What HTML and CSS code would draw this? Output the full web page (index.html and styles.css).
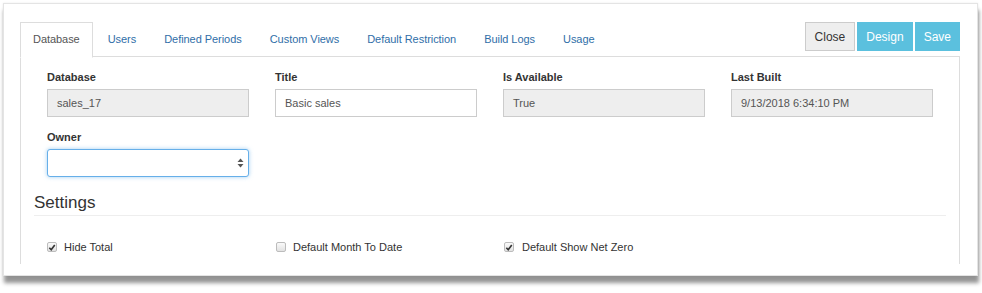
FILE: index.html
```html
<!DOCTYPE html>
<html lang="en">
<head>
    <meta charset="UTF-8">
    <title>Database settings</title>
    <link rel="stylesheet" href="styles.css">
</head>
<body>
    <div class="sheet">
        <!-- Tab bar with the action buttons on the right -->
        <div class="tab-bar">
            <ul class="tabs">
                <li class="tab active">Database</li>
                <li class="tab">Users</li>
                <li class="tab">Defined Periods</li>
                <li class="tab">Custom Views</li>
                <li class="tab">Default Restriction</li>
                <li class="tab">Build Logs</li>
                <li class="tab">Usage</li>
            </ul>
            <div class="actions">
                <button class="btn btn-default">Close</button>
                <button class="btn btn-info">Design</button>
                <button class="btn btn-info">Save</button>
            </div>
        </div>

        <!-- Tab content -->
        <div class="panel">
            <div class="row">
                <div class="field">
                    <label>Database</label>
                    <div class="input disabled">sales_17</div>
                </div>
                <div class="field">
                    <label>Title</label>
                    <div class="input">Basic sales</div>
                </div>
                <div class="field">
                    <label>Is Available</label>
                    <div class="input disabled">True</div>
                </div>
                <div class="field">
                    <label>Last Built</label>
                    <div class="input disabled">9/13/2018 6:34:10 PM</div>
                </div>
            </div>

            <div class="row row-second">
                <div class="field">
                    <label>Owner</label>
                    <div class="select focus">
                        <svg class="arrows" width="7" height="10" viewBox="0 0 7 10">
                            <path d="M3.5 0.5 L6.5 4 L0.5 4 Z" fill="#555"/>
                            <path d="M3.5 9.5 L6.5 6 L0.5 6 Z" fill="#555"/>
                        </svg>
                    </div>
                </div>
            </div>

            <h3 class="section-title">Settings</h3>

            <div class="row checks">
                <div class="check">
                    <span class="box">
                        <svg width="9" height="9" viewBox="0 0 9 9"><path d="M1.5 4.8 L3.6 7 L7.6 1.6" fill="none" stroke="#333" stroke-width="1.8"/></svg>
                    </span>
                    Hide Total
                </div>
                <div class="check">
                    <span class="box"></span>
                    Default Month To Date
                </div>
                <div class="check">
                    <span class="box">
                        <svg width="9" height="9" viewBox="0 0 9 9"><path d="M1.5 4.8 L3.6 7 L7.6 1.6" fill="none" stroke="#333" stroke-width="1.8"/></svg>
                    </span>
                    Default Show Net Zero
                </div>
            </div>
        </div>
    </div>
</body>
</html>
```

FILE: styles.css
```css
/* Page */
body {
    margin: 0;
    font-family: "Liberation Sans", Arial, sans-serif;
    background-color: white;
    color: #333;
    height: 293px;
    overflow: hidden;
}

/* White sheet with the dropped shadow */
.sheet {
    margin: 3px 4px 0 3px;
    padding: 18px 17px 11px 16px;
    background-color: white;
    border: 1px solid #e4e4e4;
    box-shadow: 1px 7px 4px rgba(0, 0, 0, 0.42), 0 0 2px rgba(0, 0, 0, 0.08);
}

/* Tab bar */
.tab-bar {
    display: flex;
    align-items: flex-start;
    border-bottom: 1px solid #ddd;
    height: 34px;
}

.tabs {
    display: flex;
    margin: 0;
    padding: 0;
    list-style: none;
}

.tab {
    font-size: 11px;
    line-height: 13px;
    padding: 10px 12px;
    margin-right: 2px;
    border: 1px solid transparent;
    color: #2f6ea8;
    letter-spacing: -0.05px;
}

.tab.active {
    color: #555;
    background-color: white;
    border-color: #ddd #ddd transparent;
    height: 13px;
    padding-bottom: 11px;
}

/* Close / Design / Save */
.actions {
    margin-left: auto;
    display: flex;
    gap: 2px;
}

.btn {
    font-family: inherit;
    font-size: 12px;
    height: 29px;
    padding: 0 8px;
    border: 1px solid #ccc;
    border-radius: 0;
}

.btn-default {
    background-color: #eee;
    color: #333;
    padding: 0 9px;
}

.btn-info {
    background-color: #5bc0de;
    border-color: #5bc0de;
    color: white;
}

/* Tab content */
.panel {
    border-left: 1px solid #ddd;
    border-right: 1px solid #ddd;
    padding: 14px 13px 10px 13px;
}

.row {
    display: grid;
    grid-template-columns: repeat(4, 228px);
}

.row-second {
    margin-top: 14px;
}

.field {
    padding: 0 13px;
}

.field label {
    display: block;
    font-size: 11px;
    font-weight: bold;
    line-height: 13px;
    margin-bottom: 5px;
}

.input {
    box-sizing: border-box;
    width: 202px;
    height: 28px;
    border: 1px solid #ccc;
    padding: 0 9px;
    font-size: 11px;
    line-height: 26px;
    color: #555;
    background-color: white;
}

.input.disabled {
    background-color: #eee;
}

.select {
    position: relative;
    box-sizing: border-box;
    width: 202px;
    height: 28px;
    border: 1px solid #66afe9;
    border-radius: 3px;
    box-shadow: 0 0 4px rgba(102, 175, 233, 0.6);
    background-color: white;
}

.select .arrows {
    position: absolute;
    right: 4px;
    top: 8px;
}

/* Settings section */
.section-title {
    margin: 16px 0 0 0;
    font-size: 17px;
    font-weight: normal;
    line-height: 20px;
    padding-bottom: 2px;
    border-bottom: 1px solid #eee;
}

.checks {
    margin-top: 24px;
}

.check {
    display: flex;
    align-items: center;
    padding: 0 13px;
    font-size: 11px;
    line-height: 14px;
}

.check .box {
    box-sizing: border-box;
    width: 10px;
    height: 10px;
    margin-right: 7px;
    border: 1px solid #bcbcbc;
    border-radius: 2px;
    background: linear-gradient(#fafafa, #e2e2e2);
    display: flex;
    align-items: center;
    justify-content: center;
}

.check:nth-child(2) .box,
.check:nth-child(3) .box {
    margin-left: 1px;
}

.check:nth-child(2) .box {
    margin-right: 7px;
}

.check:nth-child(3) .box {
    margin-right: 8px;
}
```
